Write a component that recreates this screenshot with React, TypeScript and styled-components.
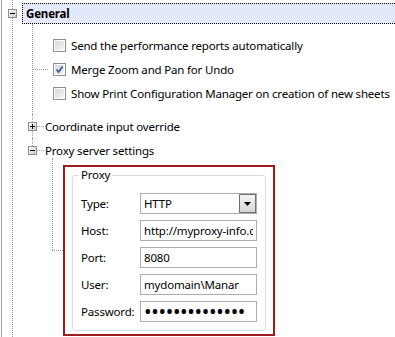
import React from "react";
import styled, { createGlobalStyle } from "styled-components";

const GlobalStyle = createGlobalStyle`
  html, body {
    margin: 0;
    padding: 0;
    background: #fff;
  }
  body {
    font-family: "Noto Sans", "Open Sans", sans-serif;
    font-size: 11.5px;
    letter-spacing: -0.18px;
    color: #000;
  }
`;

const LINE = "#a0a0a0";

function Expander({ open }: { open: boolean }) {
  return (
    <ExpanderBox>
      <svg width="9" height="9" viewBox="0 0 9 9">
        <defs>
          <linearGradient id="exp" x1="0" y1="0" x2="1" y2="1">
            <stop offset="0" stopColor="#ffffff" />
            <stop offset="1" stopColor="#c8c8c8" />
          </linearGradient>
        </defs>
        <rect x="0.5" y="0.5" width="8" height="8" fill="url(#exp)" stroke="#919191" />
        <line x1="2" y1="4.5" x2="7" y2="4.5" stroke="#000" />
        {!open && <line x1="4.5" y1="2" x2="4.5" y2="7" stroke="#000" />}
      </svg>
    </ExpanderBox>
  );
}

function Check({ checked }: { checked?: boolean }) {
  return (
    <CheckBox>
      {checked && (
        <svg width="9" height="9" viewBox="0 0 9 9">
          <path d="M1.5 4.5 L3.6 7 L7.6 1.4" fill="none" stroke="#3d5a95" strokeWidth="1.7" />
        </svg>
      )}
    </CheckBox>
  );
}

const options = [
  { label: "Send the performance reports automatically", checked: false, linked: false },
  { label: "Merge Zoom and Pan for Undo", checked: true, linked: true },
  { label: "Show Print Configuration Manager on creation of new sheets", checked: false, linked: false },
];

export default function App() {
  return (
    <>
      <GlobalStyle />
      <Frame>
        <RootBranch>
          <HeaderRow>
            <Expander open />
            <HeaderBox>General</HeaderBox>
          </HeaderRow>

          <Children>
            <Item>
              <CheckList>
                {options.map((o) => (
                  <CheckRow key={o.label}>
                    <Lead $linked={o.linked} />
                    <Check checked={o.checked} />
                    <RowText>{o.label}</RowText>
                  </CheckRow>
                ))}
              </CheckList>
            </Item>

            <Item>
              <NodeRow>
                <Expander open={false} />
                <Connector />
                <RowText>Coordinate input override</RowText>
              </NodeRow>
            </Item>

            <Item $last>
              <NodeRow $last>
                <Expander open />
                <Connector />
                <RowText>Proxy server settings</RowText>
              </NodeRow>

              <Children>
                <HostedItem>
                  <Highlight>
                    <GroupBox>
                      <Legend>Proxy</Legend>
                      <Form>
                        <FieldLabel>Type:</FieldLabel>
                        <Select>
                          <SelectValue>HTTP</SelectValue>
                          <DropButton>
                            <svg width="7" height="4" viewBox="0 0 7 4">
                              <polygon points="0,0 7,0 3.5,4" fill="#000" />
                            </svg>
                          </DropButton>
                        </Select>

                        <FieldLabel>Host:</FieldLabel>
                        <TextBox readOnly value="http://myproxy-info.com" />

                        <FieldLabel>Port:</FieldLabel>
                        <TextBox readOnly value="8080" />

                        <FieldLabel>User:</FieldLabel>
                        <TextBox readOnly value={"mydomain\\Manar"} />

                        <FieldLabel>Password:</FieldLabel>
                        <PasswordBox type="password" readOnly value="secretpasswd12" />
                      </Form>
                    </GroupBox>
                  </Highlight>
                </HostedItem>
              </Children>
            </Item>
          </Children>
        </RootBranch>
      </Frame>
    </>
  );
}

const Frame = styled.div`
  box-sizing: border-box;
  width: 394px;
  height: 337px;
  margin-left: 1px;
  padding-left: 10px;
  border-left: 1px solid #a0a0a0;
  background: #fff;
  overflow: hidden;
  display: flex;
`;

const RootBranch = styled.div`
  flex: 1;
  min-width: 0;
  border-left: 1px dotted ${LINE};
`;

const ExpanderBox = styled.span`
  position: absolute;
  left: -5px;
  top: 50%;
  margin-top: -4px;
  width: 9px;
  height: 9px;
  display: block;

  svg {
    display: block;
  }
`;

const HeaderRow = styled.div`
  position: relative;
  display: flex;
  height: 21px;
  margin-top: 3px;

  ${ExpanderBox} {
    margin-top: -4.5px;
  }
`;

const HeaderBox = styled.div`
  flex: 1;
  margin-left: 9px;
  box-sizing: border-box;
  border: 1px dotted #000;
  border-right: none;
  background: #e3e8fb;
  padding-left: 3px;
  font-weight: bold;
  display: flex;
  align-items: center;
`;

const Children = styled.div`
  margin-left: 19px;
`;

const Item = styled.div<{ $last?: boolean }>`
  border-left: ${(p) => (p.$last ? "none" : `1px dotted ${LINE}`)};
  padding-left: ${(p) => (p.$last ? "1px" : "0")};
`;

const CheckList = styled.div`
  padding: 9px 0;
`;

const CheckRow = styled.div`
  display: flex;
  align-items: center;
  height: 24px;
`;

const Lead = styled.span<{ $linked?: boolean }>`
  flex-shrink: 0;
  width: 15px;
  margin-right: 5px;
  border-top: 1px dotted ${(p) => (p.$linked ? LINE : "transparent")};
`;

const CheckBox = styled.span`
  width: 13px;
  height: 13px;
  box-sizing: border-box;
  border: 1px solid #8e8f8f;
  background: linear-gradient(135deg, #d6d6d6 0%, #f7f7f7 100%);
  box-shadow: inset 0 0 0 1px #fff;
  display: flex;
  align-items: center;
  justify-content: center;
  flex-shrink: 0;
`;

const RowText = styled.span`
  margin-left: 5px;
  white-space: nowrap;
`;

const NodeRow = styled.div<{ $last?: boolean }>`
  position: relative;
  display: flex;
  align-items: center;
  height: 24px;
  padding-left: 4px;

  &::before {
    content: "";
    display: ${(p) => (p.$last ? "block" : "none")};
    position: absolute;
    left: -1px;
    top: 0;
    height: 8px;
    border-left: 1px dotted ${LINE};
  }

  ${RowText} {
    margin-left: 1px;
  }
`;

const Connector = styled.span`
  flex-shrink: 0;
  width: 7px;
  border-top: 1px dotted ${LINE};
`;

const HostedItem = styled.div`
  position: relative;
  padding: 3px 0 0 11px;

  &::before {
    content: "";
    position: absolute;
    left: 0;
    top: -4px;
    height: 92px;
    border-left: 1px dotted ${LINE};
  }

  &::after {
    content: "";
    position: absolute;
    left: 0;
    top: 88px;
    width: 11px;
    border-top: 1px dotted ${LINE};
  }
`;

const Highlight = styled.div`
  width: 212px;
  box-sizing: border-box;
  border: 2px solid #9b1c20;
  padding: 0 7px 3px 7px;
  background: #fff;
`;

const GroupBox = styled.fieldset`
  margin: 0;
  padding: 0 0 8px 0;
  min-width: 0;
  border: 1px solid #d5dfe5;
  border-radius: 3px;
`;

const Legend = styled.legend`
  margin-left: 6px;
  padding: 0 2px;
  line-height: 16px;
`;

const Form = styled.div`
  display: grid;
  grid-template-columns: 59px 117px;
  row-gap: 6px;
  align-items: center;
  padding: 10px 0 0 8px;
`;

const FieldLabel = styled.span`
  white-space: nowrap;
`;

const Select = styled.div`
  box-sizing: border-box;
  height: 21px;
  border: 1px solid #abadb3;
  display: flex;
  align-items: center;
  padding-left: 3px;
  background: #fff;
`;

const SelectValue = styled.span`
  flex: 1;
`;

const DropButton = styled.span`
  align-self: stretch;
  width: 17px;
  box-sizing: border-box;
  border: 1px solid #707070;
  background: linear-gradient(#f4f4f4, #d6d6d6);
  display: flex;
  align-items: center;
  justify-content: center;
`;

const TextBox = styled.input`
  box-sizing: border-box;
  width: 100%;
  height: 21px;
  margin: 0;
  border: 1px solid #abadb3;
  border-radius: 0;
  padding: 0 3px;
  font: inherit;
  letter-spacing: inherit;
  color: #000;
  background: #fff;
  outline: none;
`;

const PasswordBox = styled(TextBox)`
  font-size: 20px;
  letter-spacing: -0.3px;
`;
